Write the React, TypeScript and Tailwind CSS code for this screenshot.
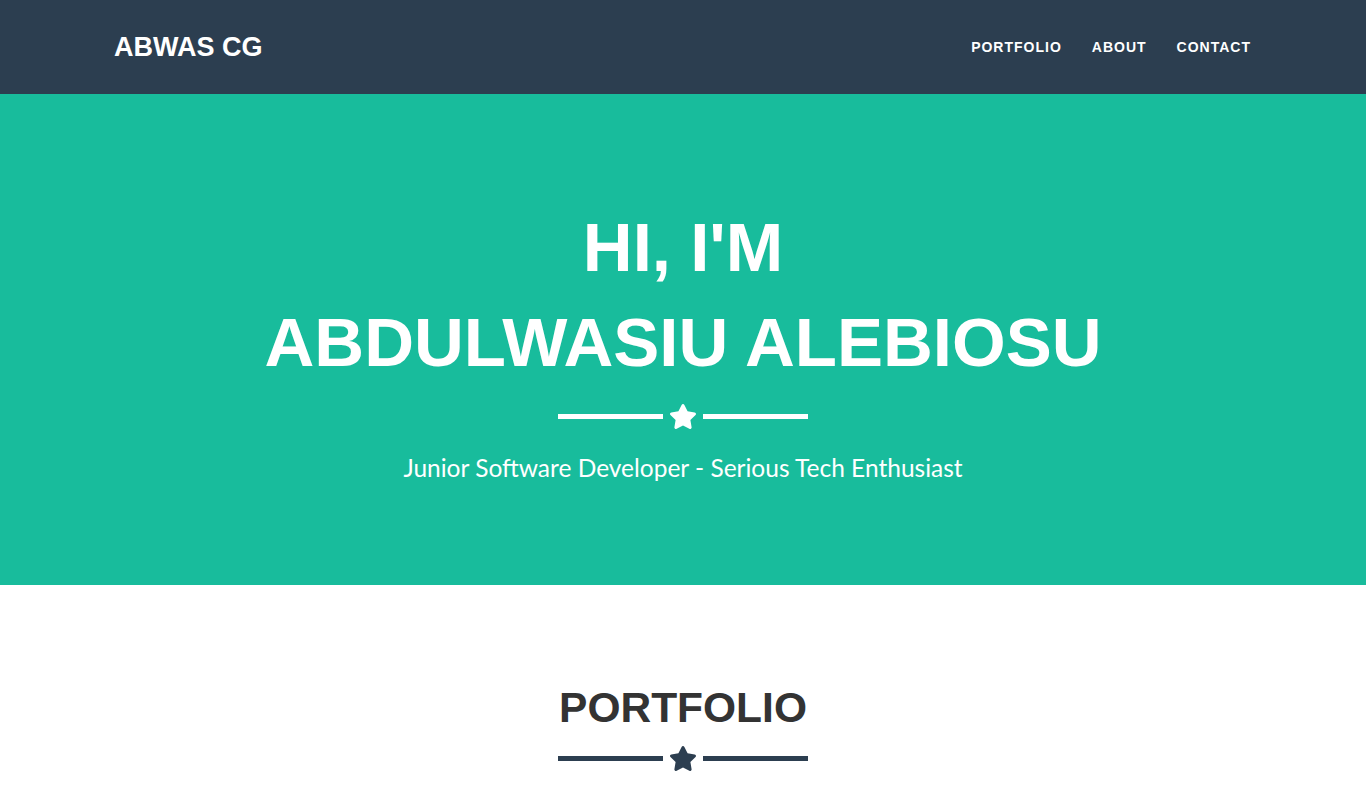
import React from "react";

const Star = ({ color }: { color: string }) => (
  <svg width="28" height="25" viewBox="0 0 576 512" className="block">
    <path
      fill={color}
      d="M259.3 17.8L194 150.2 47.9 171.5c-26.2 3.8-36.7 36.1-17.7 54.6l105.7 103-25 145.5c-4.5 26.3 23.2 46 46.4 33.7L288 439.6l130.7 68.7c23.2 12.2 50.9-7.4 46.4-33.7l-25-145.5 105.7-103c19-18.5 8.5-50.8-17.7-54.6L382 150.2 316.7 17.8c-11.7-23.6-45.6-23.9-57.4 0z"
    />
  </svg>
);

const Divider = ({ light }: { light: boolean }) => (
  <div className="flex items-center justify-center h-[25px] gap-[6px]">
    <div className={`w-[105px] h-[5px] ${light ? "bg-white" : "bg-[#2c3e50]"}`} />
    <Star color={light ? "#ffffff" : "#2c3e50"} />
    <div className={`w-[105px] h-[5px] ${light ? "bg-white" : "bg-[#2c3e50]"}`} />
  </div>
);

export default function App() {
  const heading = { fontFamily: '"Liberation Sans", Arial, sans-serif' };
  return (
    <div className="min-h-[790px] bg-white" style={heading}>
      <nav className="h-[94px] bg-[#2c3e50] flex items-center">
        <div className="w-[1170px] mx-auto px-[15px] flex items-center justify-between">
          <div className="text-white font-bold text-[27px] leading-none pl-[1px]">ABWAS CG</div>
          <div className="flex items-center -mr-[13px]">
            {["PORTFOLIO", "ABOUT", "CONTACT"].map((l) => (
              <a key={l} className="px-[15px] text-white font-bold text-[14px] tracking-[1px] leading-none">
                {l}
              </a>
            ))}
          </div>
        </div>
      </nav>
      <header className="bg-[#18bc9c] h-[491px] pt-[106px] text-white text-center">
        <h1 className="font-bold text-[69px] leading-[95px]">
          <div>HI, I'M</div>
          <div>ABDULWASIU ALEBIOSU</div>
        </h1>
        <div className="mt-[14px]">
          <Divider light={true} />
        </div>
        <p
          className="text-[24.5px] leading-[30px] mt-[24px]"
          style={{ fontFamily: 'Lato, "Noto Sans", sans-serif' }}
        >
          Junior Software Developer - Serious Tech Enthusiast
        </p>
      </header>
      <section className="pt-[100px] text-center">
        <h2 className="font-bold text-[42.5px] leading-[46px] text-[#333333]">PORTFOLIO</h2>
        <div className="mt-[15px]">
          <Divider light={false} />
        </div>
      </section>
    </div>
  );
}
